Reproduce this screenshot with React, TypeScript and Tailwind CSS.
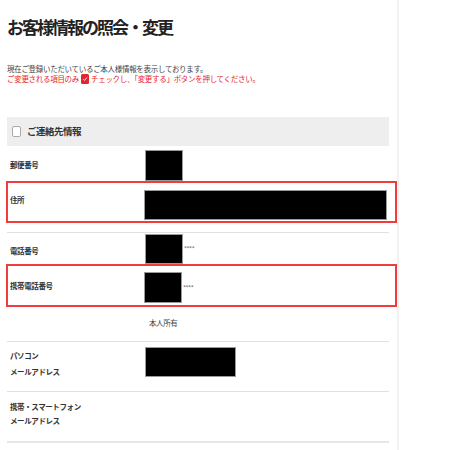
const font = { fontFamily: '"Noto Sans CJK JP", "Noto Sans", sans-serif' };

function Redacted({ w, h, mask }: { w: string; h: string; mask?: boolean }) {
  return (
    <div className="flex items-center">
      <div className={`${w} ${h} bg-black border border-[#9a9a9a]`} />
      {mask && <span className="ml-[1px] text-[6px] leading-none text-[#8a8a8a] tracking-[-0.5px]">****</span>}
    </div>
  );
}

export default function App() {
  return (
    <div className="w-[450px] h-[450px] bg-white overflow-hidden" style={font}>
      <div className="w-[399px] h-full border-r-2 border-[#f2f2f2] pl-[7px] pr-[8px]">
        <h1 className="pt-[15px] text-[17px] leading-[24px] font-bold text-[#222] tracking-[-2px]">
          お客様情報の照会・変更
        </h1>

        <div className="mt-[25px] text-[7.5px] leading-[10px] tracking-[-0.3px]">
          <p className="text-[#444]">現在ご登録いただいているご本人様情報を表示しております。</p>
          <p className="text-[#e8232d] flex items-center">
            ご変更される項目のみ
            <span className="inline-flex items-center justify-center w-[8px] h-[10px] mx-[2px] rounded-[1.5px] bg-[#e0262e]">
              <svg width="6" height="6" viewBox="0 0 10 10">
                <path d="M2 5.2 L4.2 7.4 L8.2 2.6" fill="none" stroke="white" strokeWidth="1.4" />
              </svg>
            </span>
            チェックし、「変更する」ボタンを押してください。
          </p>
        </div>

        <div className="mt-[33px] w-[382px] h-[29px] bg-[#eeeeee] flex items-center pl-[5px]">
          <span className="w-[9px] h-[11px] rounded-[2px] border border-[#aaa] bg-white" />
          <span className="ml-[6px] text-[9.5px] font-bold text-[#333] tracking-[-0.5px]">ご連絡先情報</span>
        </div>

        {/* 郵便番号 */}
        <div className="h-[35px] flex items-start text-[7.5px] font-semibold text-[#333] tracking-[-0.4px]">
          <span className="w-[138px] pl-[3px] pt-[13px]">郵便番号</span>
          <div className="pt-[4px]">
            <Redacted w="w-[38px]" h="h-[31px]" />
          </div>
        </div>

        {/* 住所 (highlighted) */}
        <div className="-ml-[1px] w-[391px] h-[42px] border-[2.5px] border-[#f03c3c] flex items-start text-[7.5px] font-semibold text-[#333] tracking-[-0.4px]">
          <span className="w-[136px] pl-[2px] pt-[11px]">住所</span>
          <div className="pt-[7px]">
            <Redacted w="w-[243px]" h="h-[30px]" />
          </div>
        </div>

        <div className="mt-[9px] w-[382px] h-[1px] bg-[#e0e0e0]" />

        {/* 電話番号 */}
        <div className="h-[31px] flex items-start text-[7.5px] font-semibold text-[#333] tracking-[-0.4px]">
          <span className="w-[138px] pl-[3px] pt-[12px]">電話番号</span>
          <div className="pt-[1px]">
            <Redacted w="w-[38px]" h="h-[30px]" mask />
          </div>
        </div>

        {/* 携帯電話番号 (highlighted) */}
        <div className="-ml-[1px] w-[391px] h-[43px] border-[2.5px] border-[#f03c3c] flex items-start text-[7.5px] font-semibold text-[#333] tracking-[-0.4px]">
          <span className="w-[136px] pl-[2px] pt-[14px]">携帯電話番号</span>
          <div className="pt-[6px]">
            <Redacted w="w-[38px]" h="h-[31px]" mask />
          </div>
        </div>

        <div className="h-[34px] flex items-start text-[7.5px] text-[#444] tracking-[-0.4px]">
          <span className="ml-[142px] pt-[10px]">本人所有</span>
        </div>

        <div className="w-[382px] h-[1px] bg-[#e0e0e0]" />

        {/* パソコン */}
        <div className="h-[49px] flex items-start text-[7.5px] font-semibold text-[#333] tracking-[-0.4px]">
          <span className="w-[138px] pl-[3px] pt-[6px] leading-[16px]">
            パソコン
            <br />
            メールアドレス
          </span>
          <div className="pt-[5px]">
            <Redacted w="w-[91px]" h="h-[30px]" />
          </div>
        </div>

        <div className="w-[382px] h-[1px] bg-[#e0e0e0]" />

        {/* 携帯・スマートフォン */}
        <div className="h-[49px] flex items-start text-[7.5px] font-semibold text-[#333] tracking-[-0.4px]">
          <span className="w-[138px] pl-[3px] pt-[8px] leading-[14px]">
            携帯・スマートフォン
            <br />
            メールアドレス
          </span>
        </div>

        <div className="w-[382px] h-[2px] bg-[#e6e6e6]" />
      </div>
    </div>
  );
}
